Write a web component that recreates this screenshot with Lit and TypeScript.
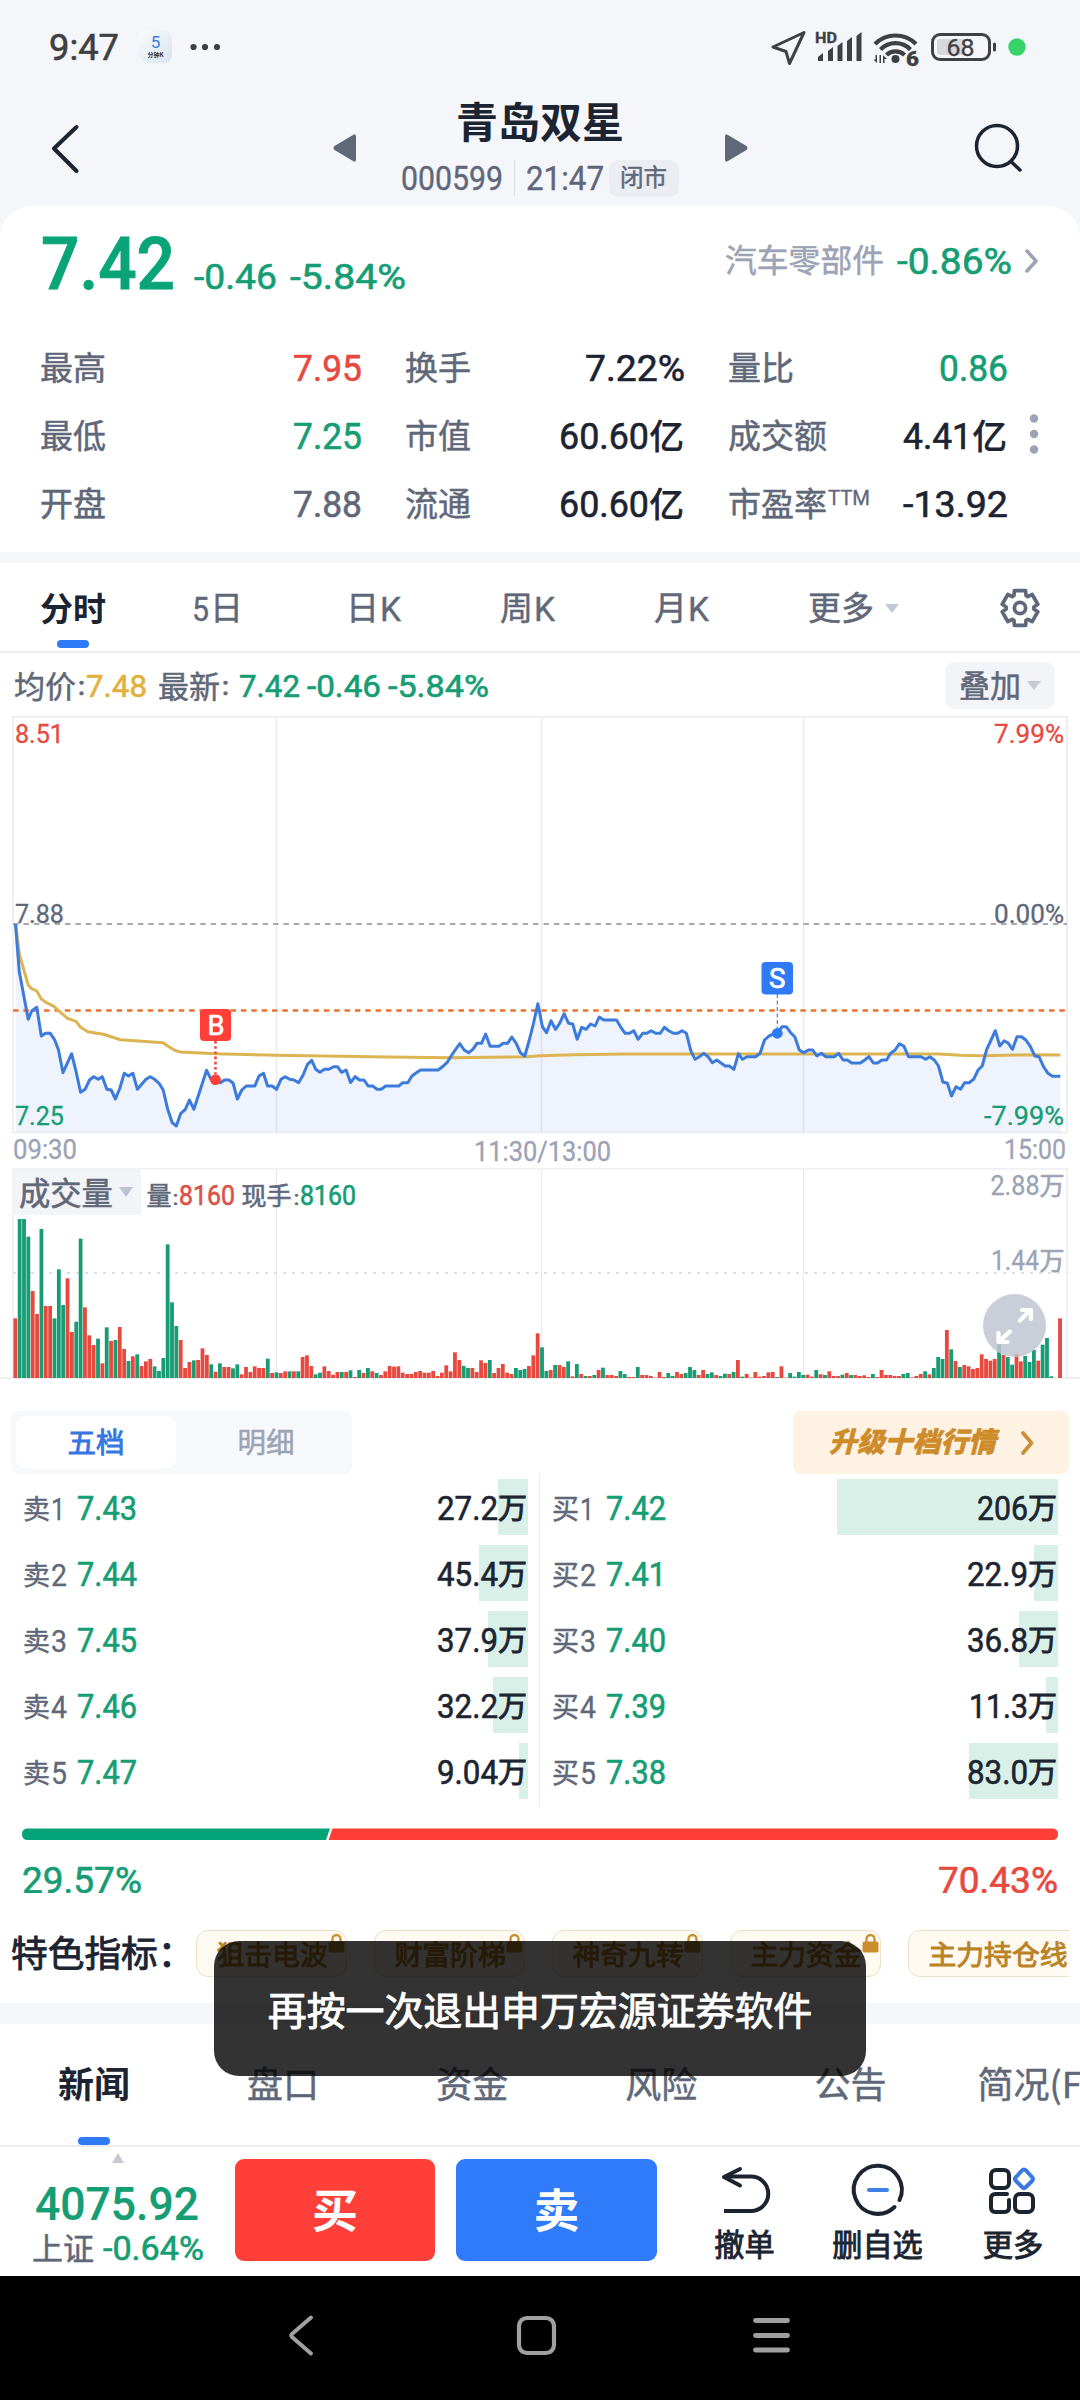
import { LitElement, html, svg, css, nothing } from "lit";
import { customElement } from "lit/decorators.js";
import { classMap } from "lit/directives/class-map.js";

const INK = "#1c2431";
const SLATE = "#5f6879";
const MUTED = "#9ba3b4";
const GREEN = "#159d74";
const RED = "#e8493f";
const BLUE = "#2f7af7";
const GOLD = "#e2b13c";

/* Condensed figure text: cap height and run width are given, the baseline is the bottom edge. */
const fig = (text: string, w: number, cap: number, color = INK, weight = 400, edge = 0.6) => html`
  <svg class="fig" width=${w} height=${cap}>
    <text x="-1" y=${cap} fill=${color} stroke=${color} stroke-width=${edge} font-size=${cap / 0.711} font-weight=${weight}
      textLength=${w + 2} lengthAdjust="spacingAndGlyphs">${text}</text>
  </svg>`;

const mark = (text: string, x: number, cy: number, w: number, cap: number, color: string, weight = 400, edge = 0.3) => svg`
  <text x=${x - 1} y=${cy + cap / 2} fill=${color} stroke=${color} stroke-width=${edge} font-size=${cap / 0.711} font-weight=${weight}
    textLength=${w + 2} lengthAdjust="spacingAndGlyphs">${text}</text>`;

const han = (text: string, x: number, cy: number, size: number, color: string) => svg`
  <text class="han" x=${x} y=${cy + size * 0.38} fill=${color} stroke=${color} stroke-width=".6" font-size=${size}>${text}</text>`;

const base = css`
  * { box-sizing: border-box; }
  svg { display: block; flex: none; overflow: visible; }
  text { font-family: Roboto, "Noto Sans CJK SC", sans-serif; }
  .han { font-family: "Noto Sans CJK SC", sans-serif; }
  .c { display: block; flex: none; line-height: 1; padding-bottom: 0.11em; white-space: nowrap;
    font-family: "Noto Sans CJK SC", sans-serif; -webkit-text-stroke: 0.5px currentColor; }
  .m { -webkit-text-stroke-width: 0.9px; }
`;

/* ---------- status bar ---------- */
@customElement("status-bar")
class StatusBar extends LitElement {
  static styles = [base, css`
    :host { display: flex; height: 93px; align-items: center; padding: 0 53px 0 50px; }
    .app { display: flex; flex-direction: column; align-items: center; justify-content: center; width: 33px; height: 33px;
      margin-left: 21px; border-radius: 8px; background: linear-gradient(135deg, #fbfcff, #d6e4f0); font-family: Roboto, sans-serif; }
    .five { font-size: 17px; line-height: 16px; color: #3a7be0; }
    .tiny { font: 700 6px/9px "Noto Sans CJK SC", sans-serif; color: #333; white-space: nowrap; }
    .dots { margin-left: 18px; }
    .right { margin-left: auto; }
  `];
  render() {
    const c = "#3f4043";
    return html`
      ${fig("9:47", 68, 26, c)}
      <div class="app"><span class="five">5</span><span class="tiny">分钟K</span></div>
      <svg class="dots" width="31" height="8" fill=${c}><circle cx="3.5" cy="4" r="3.1" /><circle cx="15" cy="4" r="3.1" /><circle cx="27" cy="4" r="3.1" /></svg>
      <svg class="right" width="256" height="40" fill="none" stroke=${c}>
        <path d="M2 20 L33 5.5 L18.5 36.5 L15 24.5 Z" stroke-width="3" stroke-linejoin="round" />
        <g stroke="none" fill=${c}>
          ${mark("HD", 45, 10.5, 20, 10, c, 700)}
          <path d="M47 34v-4l5-4v8zM57 34v-10l5-4v14zM66.500 34v-15l5-4v19zM76 34v-20l5-4v24zM85.500 34v-25l5-4v29z" />
          <circle cx="124.500" cy="32" r="4" />
          <path d="M106 28v8l-3.500-3.500h2v-4.500zM108.500 28h1.500v8h-1.500zM112 28l4 4h-2.500v4h-1.500z" />
        </g>
        <path d="M104 17a29 29 0 0 1 41 0" stroke-width="4.200" />
        <path d="M109.500 22.500a21 21 0 0 1 30 0" stroke-width="4.200" />
        <path d="M115.500 28a13 13 0 0 1 18 0" stroke-width="4.200" />
        <g>${mark("6", 136, 31.5, 11, 15, c, 900)}</g>
        <rect x="161.500" y="7.500" width="57" height="25" rx="7.500" stroke-width="3" />
        <rect x="166" y="12" width="28" height="16" rx="3" fill="#d6d8dd" stroke="none" />
        <rect x="222" y="15.500" width="3" height="9" rx="1.500" fill=${c} stroke="none" />
        <g>${mark("68", 176.5, 20.5, 26, 17, c)}</g>
        <circle cx="246" cy="20" r="8.700" fill="#35d468" stroke="none" />
      </svg>`;
  }
}

/* ---------- title bar ---------- */
@customElement("title-bar")
class TitleBar extends LitElement {
  static styles = [base, css`
    :host { display: flex; justify-content: space-between; height: 113px; padding: 0 56px 0 50px; }
    .back { margin-top: 30px; }
    .find { margin-top: 28px; }
    .mid { display: flex; width: 417px; justify-content: space-between; padding-top: 4px; margin-left: 24px; }
    .arrow { margin-top: 36px; }
    .names { display: flex; flex-direction: column; align-items: center; }
    .name { font-size: 42px; font-weight: 700; color: #1c2431; margin-top: 2px; -webkit-text-stroke-width: 0; }
    .sub { display: flex; align-items: center; margin-top: 14px; height: 37px; }
    .bar { width: 1px; height: 36px; background: #dcdfe6; margin: 0 12px; }
    .tag { display: flex; align-items: center; justify-content: center; width: 70px; height: 37px; margin-left: 6px;
      border-radius: 9px; background: #ebedf2; color: #5f6879; font-size: 23.5px; }
  `];
  render() {
    return html`
      <svg class="back" width="32" height="52" fill="none" stroke=${INK} stroke-width="4" stroke-linecap="round" stroke-linejoin="round"><path d="M26.500 4 4 25.500 26.500 48" /></svg>
      <div class="mid">
        <svg class="arrow" width="25" height="30"><path d="M21 2q3-2 3 2v22q0 4-3 2L2.500 17q-2-2 0-4z" fill=${SLATE} /></svg>
        <div class="names">
          <span class="c name">青岛双星</span>
          <div class="sub">
            ${fig("000599", 100, 23, SLATE, 400, 0.4)}<i class="bar"></i>${fig("21:47", 76, 23, SLATE, 400, 0.4)}
            <div class="tag"><span class="c">闭市</span></div>
          </div>
        </div>
        <svg class="arrow" width="25" height="30"><path d="M4 2q-3-2-3 2v22q0 4 3 2l18.500-11q2-2 0-4z" fill=${SLATE} /></svg>
      </div>
      <svg class="find" width="50" height="52" fill="none" stroke=${INK} stroke-width="3.500" stroke-linecap="round"><circle cx="23" cy="25" r="20.500" /><path d="m37.500 41 8.500 8" /></svg>`;
  }
}

/* ---------- quote summary ---------- */
type Stat = { label: string; sup?: string; value: string; w: number; unit?: string; color: string };
const STATS: Stat[] = [
  { label: "最高", value: "7.95", w: 67, color: RED },
  { label: "换手", value: "7.22%", w: 98, color: INK },
  { label: "量比", value: "0.86", w: 67, color: GREEN },
  { label: "最低", value: "7.25", w: 67, color: GREEN },
  { label: "市值", value: "60.60", w: 88, unit: "亿", color: INK },
  { label: "成交额", value: "4.41", w: 67, unit: "亿", color: INK },
  { label: "开盘", value: "7.88", w: 67, color: SLATE },
  { label: "流通", value: "60.60", w: 88, unit: "亿", color: INK },
  { label: "市盈率", sup: "TTM", value: "-13.92", w: 103, color: INK },
];

@customElement("quote-summary")
class QuoteSummary extends LitElement {
  static styles = [base, css`
    :host { display: block; height: 346px; background: #fff; border-radius: 32px 32px 0 0; }
    .top { display: flex; justify-content: space-between; height: 128px; padding: 31px 42px 0 42px; }
    .price { display: flex; align-items: flex-end; height: 52px; }
    .gap1 { width: 21px; } .gap2 { width: 15px; }
    .sector { display: flex; align-items: center; height: 48px; gap: 14px; font-size: 31.8px; color: #9ba3b4; }
    .body { display: flex; align-items: center; padding-left: 40px; }
    .grid { display: grid; grid-template-columns: 321px 279px 279px; column-gap: 44px; grid-auto-rows: 68px; }
    .cell { display: flex; align-items: center; font-size: 33px; color: #5f6879; }
    .val { display: flex; align-items: center; margin-left: auto; gap: 2px; font-size: 34.5px; color: #1c2431; }
    .sup { margin: -14px 0 0 2px; }
    .more { margin-left: 22px; margin-top: -4px; }
  `];
  render() {
    return html`
      <div class="top">
        <div class="price">${fig("7.42", 132, 52, "#09a578", 500, 1)}<i class="gap1"></i>${fig("-0.46", 81, 25, GREEN)}<i class="gap2"></i>${fig("-5.84%", 114, 25, GREEN)}</div>
        <div class="sector"><span class="c">汽车零部件</span>${fig("-0.86%", 113, 26, GREEN)}
          <svg width="13" height="24" fill="none" stroke=${MUTED} stroke-width="3.500" stroke-linecap="round" stroke-linejoin="round"><path d="M2 2 11 12 2 22" /></svg></div>
      </div>
      <div class="body">
        <div class="grid">
          ${STATS.map((s) => html`<div class="cell"><span class="c">${s.label}</span>
            ${s.sup ? html`<span class="sup">${fig(s.sup, 40, 15, SLATE, 400, 0.3)}</span>` : nothing}
            <div class="val">${fig(s.value, s.w, 26, s.color)}${s.unit ? html`<span class="c m">${s.unit}</span>` : nothing}</div></div>`)}
        </div>
        <svg class="more" width="10" height="40" fill=${MUTED}><circle cx="5" cy="4.500" r="4.200" /><circle cx="5" cy="20" r="4.200" /><circle cx="5" cy="35.500" r="4.200" /></svg>
      </div>`;
  }
}

/* ---------- period tabs ---------- */
/* Six-toothed outline, one tooth every 60 degrees starting at the top. */
const GEAR = Array.from({ length: 6 }, (_, k) => [[-26, 13.8], [-18, 18.2], [18, 18.2], [26, 13.8]].map(([d, r]) => {
  const a = ((k * 60 - 90 + d) * Math.PI) / 180;
  return `${(r * Math.cos(a)).toFixed(2)},${(r * Math.sin(a)).toFixed(2)}`;
}).join(" ")).join(" ");

@customElement("period-tabs")
class PeriodTabs extends LitElement {
  static styles = [base, css`
    :host { display: block; background: #fff; }
    .tabs { display: flex; height: 90px; border-bottom: 2px solid #ebecf0; padding: 0 40px; color: #5f6879; font-size: 33px; }
    .tab { display: flex; align-items: center; gap: 2px; width: 153px; padding-top: 3px; flex: none; }
    .tab.k { width: 154px; }
    .on { flex-direction: column; width: 66px; margin-right: 87px; font-weight: 700; color: #1c2431; padding-top: 28px; }
    .on .c { -webkit-text-stroke-width: 0; }
    .line { flex: none; width: 32px; height: 8px; border-radius: 4px; background: #2f7af7; margin-top: 10px; }
    .caret { margin-left: 9px; }
    .gear { margin: 25px 0 0 auto; }
    .info { display: flex; align-items: center; height: 63px; padding: 3px 25px 0 14px; font-size: 31px; color: #5f6879; }
    .s0 { width: 3px; } .s1 { width: 12px; } .s2 { width: 9px; }
    .add { display: flex; align-items: center; justify-content: center; gap: 6px; width: 110px; height: 47px; margin: -2px 0 0 auto;
      border-radius: 10px; background: #f3f4f8; }
  `];
  render() {
    const caret = html`<svg class="caret" width="14" height="11"><path d="M0 1h14L7 10z" fill="#c3c9d5" /></svg>`;
    return html`
      <div class="tabs">
        <div class="tab on"><span class="c">分时</span><i class="line"></i></div>
        <div class="tab">${fig("5", 15, 24, SLATE, 400, 0.4)}<span class="c">日</span></div>
        ${["日", "周", "月"].map((t) => html`<div class="tab k"><span class="c">${t}</span>${fig("K", 19, 24, SLATE, 400, 0.4)}</div>`)}
        <div class="tab"><span class="c">更多</span>${caret}</div>
        <svg class="gear" width="40" height="40" viewBox="-20 -20 40 40" fill="none" stroke=${SLATE} stroke-width="3.700" stroke-linejoin="round">
          <polygon points=${GEAR} /><circle r="5.600" /></svg>
      </div>
      <div class="info">
        <span class="c">均价</span><i class="s0"></i>${fig(":", 5, 18, SLATE, 500)}<i class="s0"></i>${fig("7.48", 59, 22, GOLD)}<i class="s1"></i>
        <span class="c">最新</span><i class="s0"></i>${fig(":", 5, 18, SLATE, 500)}<i class="s1"></i>${fig("7.42", 59, 22, GREEN)}<i class="s2"></i>
        ${fig("-0.46", 72, 22, GREEN)}<i class="s2"></i>${fig("-5.84%", 99, 22, GREEN)}
        <div class="add"><span class="c">叠加</span><svg width="14" height="11"><path d="M0 1h14L7 10z" fill="#c3c9d5" /></svg></div>
      </div>`;
  }
}

/* ---------- intraday chart ---------- */
/* Series are in plot units: 3136 across the full width, three units per pixel of height. */
const UX = 1080 / 3136;
const PRICE = `45,132 56,275 82,418 92,393 107,382 120,468 132,460 146,460 158,478 170,510 183,578 208,521 221,575 234,637 247,628
260,600 272,590 285,598 297,590 310,628 323,630 335,657 348,625 361,580 373,588 386,580 399,628 412,612 424,598 436,590 449,598
462,610 474,630 487,688 500,728 512,738 525,700 538,688 550,660 563,688 600,571 613,598 626,600 640,608 652,600 665,600 677,610
689,657 702,630 715,618 740,618 752,588 765,580 777,618 790,618 803,628 816,598 828,590 841,598 854,600 867,608 880,585 893,553
905,541 917,568 929,577 942,568 955,568 968,560 980,560 992,577 1005,570 1018,608 1031,590 1044,600 1057,600 1069,618 1082,618
1095,628 1107,628 1120,618 1158,618 1170,608 1184,608 1196,588 1209,578 1221,570 1272,570 1285,560 1298,548 1310,528 1323,508
1335,491 1348,510 1361,518 1373,508 1385,490 1398,490 1410,462 1423,499 1449,499 1461,490 1474,490 1486,471 1499,490 1511,518
1524,528 1537,480 1549,430 1562,371 1575,440 1587,458 1600,422 1613,448 1625,430 1638,401 1651,430 1663,432 1676,478 1689,442
1702,448 1715,432 1728,438 1740,411 1753,420 1790,420 1803,442 1815,460 1828,460 1840,452 1853,478 1866,460 1878,460 1891,452
1904,460 1917,460 1929,442 1942,452 1955,460 1968,460 1980,452 1993,460 2006,512 2018,538 2031,530 2043,520 2056,530 2068,548
2081,540 2106,558 2118,558 2131,568 2144,521 2156,538 2169,530 2194,530 2207,520 2220,480 2233,468 2257,458 2271,440 2283,440
2296,458 2308,470 2321,510 2334,518 2347,510 2360,510 2372,528 2385,520 2398,530 2423,530 2435,520 2448,540 2460,540 2473,549
2498,549 2511,540 2523,530 2536,549 2548,549 2561,540 2574,540 2586,520 2599,510 2612,491 2625,499 2638,530 2675,530 2688,538
2700,530 2713,540 2725,558 2738,606 2751,610 2763,648 2776,620 2789,628 2801,608 2814,608 2827,598 2840,570 2852,558 2865,508
2878,480 2890,452 2903,498 2916,482 2928,490 2940,508 2953,470 2966,470 2979,480 2992,500 3005,528 3017,530 3030,560 3043,580
3056,589 3079,589`;
const AVERAGE = `45,132 57,225 82,315 92,326 107,333 120,357 135,368 158,380 170,392 196,415 221,424 234,442 255,455 300,463
350,479 474,488 487,498 510,512 525,516 626,521 800,526 1130,531 1310,533 1530,530 1568,527 1668,524 1818,522 2728,522
2788,526 2848,527 3018,524 3079,525`;
/* One entry per minute: direction, then the distance of the bar's top from the plot's top. */
const VOLUME = `r565 g267 g267 g320 r483 r552 g297 r528 r528 g565 g418 g525 r445 r606 g575 g326 r532 r616 r645 g626 r700 g592
r633 g630 r591 r657 g693 r679 g673 r708 r694 r687 g709 g723 g684 g343 g517 g588 r630 r714 r696 g691 r690 r655 r675 g703 r725
g700 r711 r711 g715 g703 r733 r711 r726 r709 r714 r714 g686 r729 g727 r729 r724 g724 r724 g724 r681 r676 r708 g733 g728 r709
r723 r734 r726 g726 r726 g721 r741 g720 r729 g714 r724 g729 r735 r724 r708 r710 r709 r728 r732 r732 r726 r723 r728 r728 r723
r738 r728 r706 r724 r667 r690 g708 g714 r714 r726 r691 r699 g690 r729 r714 r702 r728 r732 g714 g720 g717 r708 r676 r610 g652
g723 r720 g705 r705 r711 g694 r739 g702 r732 g738 r738 g735 r720 g713 r735 r735 r738 g723 g732 r741 r741 g711 r735 r735 r738
r743 r726 r741 g729 g738 r726 r732 g729 g711 g720 r735 r720 g732 g727 r735 g738 g731 r732 g726 r690 g740 r732 r743 r726 r740
r738 r727 r726 g741 r709 r743 g729 g740 g726 g735 r734 r740 g720 r733 g735 r724 r738 r738 g734 r729 g735 r735 r738 r736 r741
g732 r741 r720 r735 r735 r738 r738 g732 g729 r742 r738 r732 g724 r733 g714 g681 g687 r600 g658 r693 g711 r705 r709 r717 r714
r673 r687 r692 r687 g643 r675 g681 g704 r672 r694 g678 g696 g660 r692 g644 g624 g739 r744 r565`.split(/\s+/);

const toPixels = (series: string, dy: number) =>
  series.split(/\s+/).map((p) => {
    const [x, y] = p.split(",").map(Number);
    return `${(x * UX).toFixed(1)},${(y / 3 + dy).toFixed(1)}`;
  }).join(" ");

@customElement("minute-chart")
class MinuteChart extends LitElement {
  static styles = [base, css`
    :host { display: block; background: #fff; }
  `];
  render() {
    const line = toPixels(PRICE, 164);
    return html`
      <svg width="1080" height="452">
        <g fill="none" stroke="#ebecef" stroke-width="1.500">
          <path d="M13 .8H1067V416.500H13ZM276.500 1V416M541.500 1V416M803.500 1V416" />
        </g>
        <polygon points=${`${line} 1060.4,416 15.5,416`} fill="#3d7cf0" fill-opacity=".09" />
        <path d="M13 208H1067" stroke="#8b8e93" stroke-width="1.600" stroke-dasharray="5.500 4.900" />
        <path d="M13 294.500H1067" stroke="#e9722c" stroke-width="2.400" stroke-dasharray="5.500 4.860" />
        <polyline points=${toPixels(AVERAGE, 164)} fill="none" stroke="#dcb552" stroke-width="3" stroke-linejoin="round" />
        <polyline points=${line} fill="none" stroke="#3c7adb" stroke-width="3" stroke-linejoin="round" />
        ${mark("8.51", 16, 18, 47, 18, RED)}${mark("7.99%", 995, 18, 68, 18, RED)}
        ${mark("7.88", 16, 198, 47, 18, SLATE)}${mark("0.00%", 995, 198, 68, 18, SLATE)}
        ${mark("7.25", 16, 399.5, 47, 18, GREEN)}${mark("-7.99%", 985, 399.5, 78, 18, GREEN)}
        <path d="M215.500 325V358" stroke="#e8493f" stroke-width="2.600" stroke-dasharray="2.600 2.600" />
        <rect x="200" y="293" width="31" height="32" rx="4" fill="#ff3f38" />
        <circle cx="215.500" cy="363.700" r="5.400" fill="#ff3f38" />
        ${mark("B", 208.5, 309.5, 15, 19.5, "#fff", 400, 0.7)}
        <path d="M777.300 278V312" stroke="#4a83dc" stroke-width="1.200" stroke-dasharray="4 2.500" />
        <rect x="761.500" y="246" width="31.500" height="32.500" rx="4" fill=${BLUE} />
        <circle cx="777.300" cy="317.300" r="5.400" fill=${BLUE} />
        ${mark("S", 770, 262, 14.5, 19.5, "#fff", 400, 0.7)}
        ${mark("09:30", 14, 433.5, 62, 19, MUTED)}${mark("11:30/13:00", 475, 435.5, 135, 19, MUTED)}${mark("15:00", 1005, 433.5, 60, 19, MUTED)}
      </svg>
      <svg width="1080" height="228">
        <path d="M13 .8H1067V210M13 .8V210M276.500 1V210M541.500 1V210M803.500 1V210M0 210H1080" fill="none" stroke="#ebecef" stroke-width="1.300" />
        <path d="M13 105H1067" stroke="#dfe0e4" stroke-width="2" stroke-dasharray="3 6" />
        ${VOLUME.map((v, i) => {
          const h = (744 - Number(v.slice(1))) / 3;
          return svg`<rect x=${13.4 + i * 12.64 * UX} y=${210 - h} width="3.800" height=${h} fill=${v[0] === "r" ? RED : "#189c74"} />`;
        })}
        <rect x="13" y="1" width="128" height="46" fill="#f3f4f8" />
        ${han("成交量", 19, 25, 31.3, SLATE)}
        <path d="M119 19h14l-7 10z" fill="#bcc3d0" />
        ${han("量", 146.5, 27.5, 25, SLATE)}${mark(":", 173.5, 30, 4, 14, SLATE, 500)}${mark("8160", 180, 27.5, 54, 19, "#d9534b", 400, 0.6)}
        ${han("现手", 241.5, 27.5, 25, SLATE)}${mark(":", 294.5, 30, 4, 14, SLATE, 500)}${mark("8160", 301, 27.5, 54, 19, GREEN, 400, 0.6)}
        ${mark("2.88", 991.5, 17.5, 47, 19, MUTED)}${han("万", 1039.5, 17.5, 25, MUTED)}
        ${mark("1.44", 992, 92.5, 46, 19, MUTED)}${han("万", 1039.5, 92.5, 25, MUTED)}
        <circle cx="1014.500" cy="157.500" r="31.500" fill="#c0c5d1" fill-opacity=".84" />
        <path d="M1020 152.500 1029.500 143M1022 142h9v9M1010 163.500 999.500 173M998.500 165v9h9" fill="none" stroke="#fff" stroke-width="4.200" stroke-linecap="round" stroke-linejoin="round" />
      </svg>`;
  }
}

/* ---------- order book ---------- */
type Level = { side: string; n: number; price: string; vol: string; vw: number; bar: number };
const lv = (side: string, n: number, price: string, vol: string, bar: number, vw = 59): Level => ({ side, n, price, vol, vw, bar });
const ASKS = [lv("卖", 1, "7.43", "27.2", 30), lv("卖", 2, "7.44", "45.4", 49), lv("卖", 3, "7.45", "37.9", 40), lv("卖", 4, "7.46", "32.2", 35), lv("卖", 5, "7.47", "9.04", 9)];
const BIDS = [lv("买", 1, "7.42", "206", 221, 49), lv("买", 2, "7.41", "22.9", 24), lv("买", 3, "7.40", "36.8", 39), lv("买", 4, "7.39", "11.3", 12, 57), lv("买", 5, "7.38", "83.0", 89)];

@customElement("order-book")
class OrderBook extends LitElement {
  static styles = [base, css`
    :host { display: block; background: #fff; padding-top: 15px; }
    .head { display: flex; justify-content: space-between; height: 63px; padding: 0 11px; }
    .seg { display: flex; width: 341px; padding: 5px; border-radius: 8px; background: #f7f8fc; font-size: 28.5px; color: #9ba3b4; }
    .opt { display: flex; flex: none; align-items: center; justify-content: center; width: 160px; }
    .opt.on { border-radius: 10px; background: #fff; color: #3576e0; }
    .opt.off { width: 171px; padding-left: 9px; }
    .up { display: flex; align-items: center; width: 276px; padding-left: 36px; border-radius: 8px; background: #fef3e3; gap: 25px; }
    .uptext { font-size: 27.8px; font-weight: 900; font-style: italic; color: #cd8b2a; }
    .cols { display: flex; height: 333px; padding-left: 22px; }
    .side { width: 506px; }
    .side.bid { width: 507px; margin-left: 11px; }
    .rule { width: 1px; margin-left: 11px; background: #ebecf0; }
    .row { display: flex; height: 66px; align-items: flex-start; padding-top: 5px; }
    .in { position: relative; display: flex; align-items: center; width: 100%; height: 56px; padding: 3px 1px 0 1px; color: #5f6879; font-size: 27px; }
    .bar { position: absolute; right: 0; top: 0; height: 56px; background: #d9f0e9; }
    .num { display: flex; width: 28px; padding-left: 2px; }
    .vol { position: relative; display: flex; align-items: center; gap: 1px; margin-left: auto; font-size: 29px; color: #1c2431; }
    .ratio { margin: 21px 22px 0; }
    .pct { display: flex; justify-content: space-between; margin: 27px 23px 0 23px; }
  `];
  side(rows: Level[], cls: string) {
    return html`<div class="side ${cls}">${rows.map((r) => html`<div class="row"><div class="in">
      <i class="bar" style="width:${r.bar}px"></i>
      <span class="c">${r.side}</span><span class="num">${fig(String(r.n), r.n === 1 ? 12 : 14, 22, SLATE, 400, 0.3)}</span>
      ${fig(r.price, 58, 23, GREEN)}
      <div class="vol">${fig(r.vol, r.vw, 23)}<span class="c m">万</span></div></div></div>`)}</div>`;
  }
  render() {
    return html`
      <div class="head">
        <div class="seg"><div class="opt on"><span class="c m">五档</span></div><div class="opt off"><span class="c">明细</span></div></div>
        <div class="up"><span class="c uptext">升级十档行情</span>
          <svg width="14" height="26" fill="none" stroke="#cd8f35" stroke-width="3.800" stroke-linecap="round" stroke-linejoin="round"><path d="M2 3 10.500 13 2 23" /></svg></div>
      </div>
      <div class="cols">${this.side(ASKS, "ask")}<i class="rule"></i>${this.side(BIDS, "bid")}</div>
      <svg class="ratio" width="1036" height="12"><path d="M6 .5H308L304 12H6Q0 12 0 6.200T6 .5Z" fill="#05a478" /><path d="M310.500 .5H1030Q1036 .5 1036 6.200T1030 12H306.500Z" fill="#ff3f38" /></svg>
      <div class="pct">${fig("29.57%", 118, 26, GREEN)}${fig("70.43%", 118, 26, RED)}</div>`;
  }
}

/* ---------- indicator chips and news tabs ---------- */
@customElement("indicator-strip")
class IndicatorStrip extends LitElement {
  static styles = [base, css`
    :host { display: flex; align-items: center; height: 110px; padding: 11px 11px 0 11px; background: #fff; }
    .title { width: 185px; font-size: 36.700px; color: #1c2431; line-height: 1.1; }
    .clip { display: flex; gap: 27px; width: 873px; overflow: hidden; }
    .chip { position: relative; display: flex; flex: none; align-items: center; width: 151px; height: 47px; padding: 3px 0 0 19.5px; border: 1.5px solid #ecdfc3;
      border-radius: 12px; background: #fef9f1; color: #b98326; font-size: 27.800px; }
    .chip.wide { width: 190px; }
    .lock { position: absolute; right: 1px; top: 2px; }
  `];
  render() {
    return html`<span class="c m title">特色指标：</span><div class="clip">
      ${["狙击电波", "财富阶梯", "神奇九转", "主力资金", "主力持仓线"].map((t, i) => html`
        <div class="chip ${classMap({ wide: i === 4 })}"><span class="c m">${t}</span>
          ${i < 4 ? html`<svg class="lock" width="17" height="20"><path d="M4.500 10V6a4 4 0 0 1 8 0v4" fill="none" stroke="#c98f2f" stroke-width="2.300" /><rect x=".5" y="8.500" width="16" height="11" rx="2" fill="#c98f2f" /></svg>` : nothing}</div>`)}
      </div>`;
  }
}

@customElement("news-tabs")
class NewsTabs extends LitElement {
  static styles = [base, css`
    :host { display: flex; height: 123px; background: #fff; border-bottom: 2px solid #ebecf0; padding: 40px 0 0 58px; overflow: hidden; font-size: 36px; color: #5f6879; }
    .t { display: flex; flex: none; flex-direction: column; width: 189.1px; }
    .on { font-weight: 700; color: #1c2431; }
    .on .c { -webkit-text-stroke-width: 0; }
    .line { width: 32px; height: 8px; margin: 33px 0 0 20px; border-radius: 4px; background: #2f7af7; }
    .last { display: flex; margin-left: -26px; }
  `];
  render() {
    return html`<div class="t on"><span class="c">新闻</span><i class="line"></i></div>
      ${["盘口", "资金", "风险", "公告"].map((t) => html`<div class="t"><span class="c">${t}</span></div>`)}
      <div class="last"><span class="c">简况(F10)</span></div>`;
  }
}

/* ---------- trade bar ---------- */
@customElement("trade-bar")
class TradeBar extends LitElement {
  static styles = [base, css`
    :host { display: flex; height: 129px; background: #fff; }
    .index { display: flex; flex-direction: column; width: 235px; padding: 6px 0 0 32px; font-size: 31px; color: #5f6879; }
    .up { margin-left: 80px; }
    .big { margin: 24px 0 0 4px; }
    .low { display: flex; align-items: center; gap: 10px; height: 34px; margin-top: 11px; }
    .btn { display: flex; align-items: center; justify-content: center; width: 200px; height: 102px; margin: 12px 21px 0 0; border-radius: 9px;
      color: #fff; font-size: 46px; font-weight: 700; }
    .btn .c { -webkit-text-stroke-width: 0; }
    .buy { background: #ff3f38; } .sell { background: #2f7bfa; width: 201px; margin-right: 42px; }
    .act { display: flex; flex-direction: column; align-items: center; padding-top: 16px; gap: 13px; font-size: 30.200px; color: #1c2431; }
    .a { width: 91px; } .b { width: 91px; margin-left: 42px; } .d { width: 60px; margin-left: 60px; }
  `];
  render() {
    return html`
      <div class="index"><svg class="up" width="12" height="10"><path d="M6 0l6 10H0z" fill="#c4c9d4" /></svg>
        <span class="big">${fig("4075.92", 162, 33, GREEN, 500, 0.2)}</span>
        <div class="low"><span class="c">上证</span>${fig("-0.64%", 99, 23, GREEN)}</div></div>
      <div class="btn buy"><span class="c">买</span></div>
      <div class="btn sell"><span class="c">卖</span></div>
      <div class="act a"><svg width="52" height="52" fill="none" stroke=${INK} stroke-width="4" stroke-linejoin="round"><path d="M21 6 5 14 21 22.500" stroke-linecap="round" /><path d="M6 13.500H32A17 17 0 0 1 32 48H5" /></svg><span class="c m">撤单</span></div>
      <div class="act b"><svg width="54" height="52" fill="none" stroke-width="4" stroke-linecap="round"><path d="M48.500 37A24 24 0 1 0 43.500 44" stroke=${INK} /><path d="M18 27H36" stroke="#3f7fe8" /></svg><span class="c m">删自选</span></div>
      <div class="act d"><svg width="52" height="52" fill="none" stroke=${INK} stroke-width="4" stroke-linecap="round" stroke-linejoin="round">
        <rect x="4" y="7" width="18" height="18" rx="5" /><rect x="28" y="31" width="18" height="18" rx="5" /><path d="M20 31H8.500Q4 31 4 35.500V44.500Q4 49 8.500 49H17.500Q22 49 22 44.500V37" />
        <path d="M35 7.500Q37 5.500 39 7.500L45 14Q47 16 45 18L39 24Q37 26 35 24L29 18Q27 16 29 14Z" stroke="#3a78e6" /></svg><span class="c m">更多</span></div>`;
  }
}

@customElement("nav-keys")
class NavKeys extends LitElement {
  static styles = [base, css`
    :host { display: flex; height: 124px; padding: 39px 289px 0 287px; justify-content: space-between; background: #000; }
    .home { margin-left: 6px; }
  `];
  render() {
    return html`
      <svg width="28" height="42" fill="none" stroke="#a0a0a0" stroke-width="4" stroke-linecap="round" stroke-linejoin="round"><path d="M24 2.500 5 19Q3.500 20.500 5 22L24 38.500" /></svg>
      <svg class="home" width="40" height="42" fill="none" stroke="#a0a0a0" stroke-width="4.200"><rect x="2" y="3" width="35" height="35" rx="8" /></svg>
      <svg width="39" height="42" fill="none" stroke="#a0a0a0" stroke-width="4.800" stroke-linecap="round"><path d="M3.500 5.500H35.500M3.500 20.500H35.500M3.500 35H35.500" /></svg>`;
  }
}

@customElement("app-root")
class AppRoot extends LitElement {
  static styles = [base, css`
    :host { display: block; position: relative; width: 1080px; height: 2400px; overflow: hidden; background: #f5f6fa; }
    .page { display: flex; flex-direction: column; }
    .gap { height: 11px; flex: none; } .gap.big { height: 21px; }
    .toast { position: absolute; left: 214px; top: 1941px; display: flex; align-items: center; justify-content: center; width: 652px; height: 135px;
      padding-top: 4px; border-radius: 25px; background: rgba(0, 0, 0, .8); color: #fff; font-size: 38.900px; }
  `];
  render() {
    return html`<div class="page">
        <status-bar></status-bar>
        <title-bar></title-bar>
        <quote-summary></quote-summary>
        <div class="gap"></div>
        <period-tabs></period-tabs>
        <minute-chart></minute-chart>
        <order-book></order-book>
        <indicator-strip></indicator-strip>
        <div class="gap big"></div>
        <news-tabs></news-tabs>
        <trade-bar></trade-bar>
        <nav-keys></nav-keys>
      </div>
      <div class="toast"><span class="c m">再按一次退出申万宏源证券软件</span></div>`;
  }
}
